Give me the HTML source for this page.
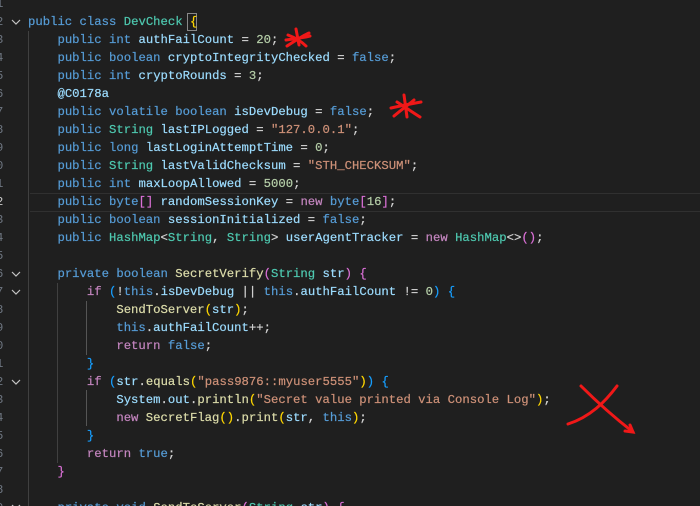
<!DOCTYPE html>
<html><head><meta charset="utf-8"><style>
html,body{margin:0;padding:0;background:#1f1f1f;width:700px;height:506px;overflow:hidden;position:relative}
.l{position:absolute;left:28px;white-space:pre;font-family:"Liberation Mono",monospace;font-size:12.27px;line-height:18px;color:#d4d4d4;height:18px;-webkit-text-stroke:0.2px}
.k{color:#569cd6}.t{color:#4ec9b0}.v{color:#9cdcfe}.n{color:#b5cea8}.s{color:#ce9178}.c{color:#c586c0}.f{color:#dcdcaa}
.y{color:#ffd700}.m{color:#da70d6}.b{color:#179fff}
.ln{position:absolute;left:-4px;font-family:"Liberation Mono",monospace;font-size:12.27px;color:#6e7681;line-height:18px}
.g{position:absolute;width:1px;background:#404040}
</style></head><body>
<div class="g" style="left:28px;top:31px;height:475px"></div>
<div class="g" style="left:57px;top:283px;height:180px"></div>
<div class="g" style="left:86px;top:301px;height:54px;background:#555"></div>
<div class="g" style="left:86px;top:390px;height:36px;background:#555"></div>
<div style="position:absolute;left:30px;top:193px;width:670px;height:17px;border-top:1px solid #303030;border-bottom:1px solid #303030"></div>
<div style="position:absolute;left:187px;top:13px;width:8px;height:16px;border:1px solid #888"></div>
<div class="ln" style="top:-5px">1</div><div class="ln" style="top:13px">2</div><div class="ln" style="top:31px">3</div><div class="ln" style="top:49px">4</div><div class="ln" style="top:67px">5</div><div class="ln" style="top:85px">6</div><div class="ln" style="top:103px">7</div><div class="ln" style="top:121px">8</div><div class="ln" style="top:139px">9</div><div class="ln" style="top:157px">0</div><div class="ln" style="top:175px">1</div><div class="ln" style="top:193px;color:#ccc">2</div><div class="ln" style="top:211px">3</div><div class="ln" style="top:229px">4</div><div class="ln" style="top:247px">5</div><div class="ln" style="top:265px">6</div><div class="ln" style="top:283px">7</div><div class="ln" style="top:301px">8</div><div class="ln" style="top:319px">9</div><div class="ln" style="top:337px">0</div><div class="ln" style="top:355px">1</div><div class="ln" style="top:373px">2</div><div class="ln" style="top:391px">3</div><div class="ln" style="top:409px">4</div><div class="ln" style="top:427px">5</div><div class="ln" style="top:445px">6</div><div class="ln" style="top:463px">7</div><div class="ln" style="top:481px">8</div><div class="ln" style="top:499px">9</div>
<svg style="position:absolute;left:0;top:0" width="30" height="506" fill="none" stroke="#c5c5c5" stroke-width="1.2">
<path d="M12 20 L16 24 L20 20"/><path d="M12 272 L16 276 L20 272"/><path d="M12 290 L16 294 L20 290"/><path d="M12 380 L16 384 L20 380"/><path d="M12 505 L16 509 L20 505"/>
</svg>
<div class="l" style="top:13px"><span class="k">public</span> <span class="k">class</span> <span class="t">DevCheck</span> <span class="y">{</span></div>
<div class="l" style="top:31px">    <span class="k">public</span> <span class="k">int</span> <span class="v">authFailCount</span> = <span class="n">20</span>;</div>
<div class="l" style="top:49px">    <span class="k">public</span> <span class="k">boolean</span> <span class="v">cryptoIntegrityChecked</span> = <span class="k">false</span>;</div>
<div class="l" style="top:67px">    <span class="k">public</span> <span class="k">int</span> <span class="v">cryptoRounds</span> = <span class="n">3</span>;</div>
<div class="l" style="top:85px">    <span class="v">@C0178a</span></div>
<div class="l" style="top:103px">    <span class="k">public</span> <span class="k">volatile</span> <span class="k">boolean</span> <span class="v">isDevDebug</span> = <span class="k">false</span>;</div>
<div class="l" style="top:121px">    <span class="k">public</span> <span class="t">String</span> <span class="v">lastIPLogged</span> = <span class="s">"127.0.0.1"</span>;</div>
<div class="l" style="top:139px">    <span class="k">public</span> <span class="k">long</span> <span class="v">lastLoginAttemptTime</span> = <span class="n">0</span>;</div>
<div class="l" style="top:157px">    <span class="k">public</span> <span class="t">String</span> <span class="v">lastValidChecksum</span> = <span class="s">"STH_CHECKSUM"</span>;</div>
<div class="l" style="top:175px">    <span class="k">public</span> <span class="k">int</span> <span class="v">maxLoopAllowed</span> = <span class="n">5000</span>;</div>
<div class="l" style="top:193px">    <span class="k">public</span> <span class="k">byte</span><span class="m">[]</span> <span class="v">randomSessionKey</span> = <span class="c">new</span> <span class="k">byte</span><span class="m">[</span><span class="n">16</span><span class="m">]</span>;</div>
<div class="l" style="top:211px">    <span class="k">public</span> <span class="k">boolean</span> <span class="v">sessionInitialized</span> = <span class="k">false</span>;</div>
<div class="l" style="top:229px">    <span class="k">public</span> <span class="t">HashMap</span>&lt;<span class="t">String</span>, <span class="t">String</span>&gt; <span class="v">userAgentTracker</span> = <span class="c">new</span> <span class="t">HashMap</span>&lt;&gt;<span class="m">()</span>;</div>
<div class="l" style="top:265px">    <span class="k">private</span> <span class="k">boolean</span> <span class="f">SecretVerify</span><span class="m">(</span><span class="t">String</span> <span class="v">str</span><span class="m">)</span> <span class="m">{</span></div>
<div class="l" style="top:283px">        <span class="c">if</span> <span class="b">(</span>!<span class="k">this</span>.<span class="v">isDevDebug</span> || <span class="k">this</span>.<span class="v">authFailCount</span> != <span class="n">0</span><span class="b">)</span> <span class="b">{</span></div>
<div class="l" style="top:301px">            <span class="f">SendToServer</span><span class="y">(</span><span class="v">str</span><span class="y">)</span>;</div>
<div class="l" style="top:319px">            <span class="k">this</span>.<span class="v">authFailCount</span>++;</div>
<div class="l" style="top:337px">            <span class="c">return</span> <span class="k">false</span>;</div>
<div class="l" style="top:355px">        <span class="b">}</span></div>
<div class="l" style="top:373px">        <span class="c">if</span> <span class="b">(</span><span class="v">str</span>.<span class="f">equals</span><span class="y">(</span><span class="s">"pass9876::myuser5555"</span><span class="y">)</span><span class="b">)</span> <span class="b">{</span></div>
<div class="l" style="top:391px">            <span class="v">System</span>.<span class="v">out</span>.<span class="f">println</span><span class="y">(</span><span class="s">"Secret value printed via Console Log"</span><span class="y">)</span>;</div>
<div class="l" style="top:409px">            <span class="c">new</span> <span class="f">SecretFlag</span><span class="y">()</span>.<span class="f">print</span><span class="y">(</span><span class="v">str</span>, <span class="k">this</span><span class="y">)</span>;</div>
<div class="l" style="top:427px">        <span class="b">}</span></div>
<div class="l" style="top:445px">        <span class="c">return</span> <span class="k">true</span>;</div>
<div class="l" style="top:463px">    <span class="m">}</span></div>
<div class="l" style="top:499px">    <span class="k">private</span> <span class="k">void</span> <span class="f">SendToServer</span><span class="m">(</span><span class="t">String</span> <span class="v">str</span><span class="m">)</span> <span class="m">{</span></div>
<svg style="position:absolute;left:0;top:0" width="700" height="506" fill="none" stroke="#f01818" stroke-width="3" stroke-linecap="round">
<path d="M296 29 L299 45"/><path d="M286 40 C293 39 302 38 310 36"/><path d="M287 46 C295 41 302 36 309 33"/><path d="M288 35 C296 38 302 42 306 46"/>
<path d="M404 95 L407 117"/><path d="M391 108 C400 106 410 104 421 102"/><path d="M394 116 C401 110 408 105 414 100"/><path d="M397 102 C405 107 412 112 420 117"/>
<path d="M581 386 C595 400 615 418 633 432"/><path d="M617 386 C605 402 590 417 568 424"/><path d="M625 431 L633 432 L630 425"/>
</svg>
</body></html>
